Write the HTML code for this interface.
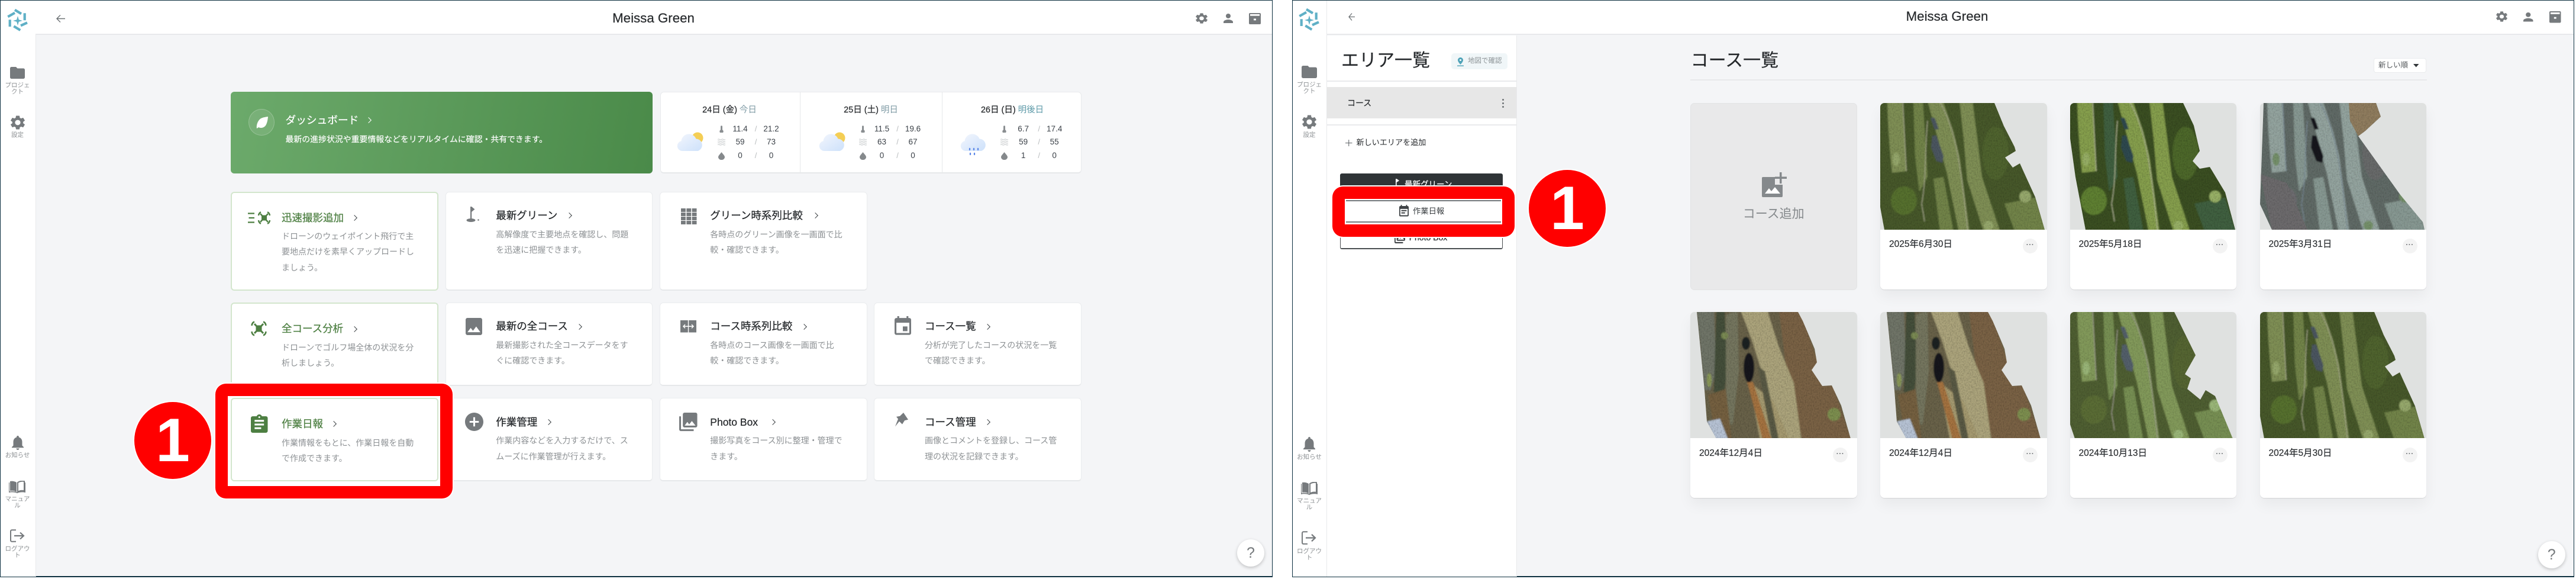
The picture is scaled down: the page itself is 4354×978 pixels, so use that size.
<!DOCTYPE html>
<html lang="ja"><head><meta charset="utf-8"><title>Meissa Green</title>
<style>
html,body{margin:0;padding:0;background:#fff}
body{position:relative;width:4354px;height:978px;overflow:hidden;font-family:"Liberation Sans","Noto Sans CJK JP",sans-serif;color:#25282b}
.p{position:absolute;top:0;height:975px;box-sizing:border-box;border:1px solid #0c2f3f;border-bottom-width:2px;background:#f4f5f7}
.b{position:absolute;box-sizing:border-box}
.t{position:absolute;white-space:nowrap;line-height:20px;height:20px}
.c{transform:translateX(-50%)}
svg{position:absolute;fill:#767a7d;overflow:visible}
.card{position:absolute;box-sizing:border-box;width:350.5px;background:#fff;border:1px solid #eaecee;border-bottom:2px solid #e6e8ea;border-radius:6px}
.gc{border:2px solid #d3e6cd}
.ti{font-size:17.5px;-webkit-text-stroke:.25px currentColor;color:#25282b}
.gr{color:#4d7f42}
.de{position:absolute;white-space:nowrap;font-size:14px;line-height:26.3px;color:#8d9194}
.sb{font-size:10.5px;color:#8c9093;line-height:11px;height:11px}
.ch{position:absolute;width:7px;height:7px;box-sizing:border-box;border-top:1.8px solid #3f4447;border-right:1.8px solid #3f4447;transform:translate(-50%,-50%) rotate(45deg)}
.red{position:absolute;box-sizing:border-box;border:21px solid #ff0000;border-radius:18px;background:#fff;box-shadow:0 0 0 2px #fff}
.num{position:absolute;width:130px;height:130px;border-radius:50%;background:#ff0000;box-shadow:0 0 0 2px #fff;color:#fff;font:bold 104px/130px "Liberation Sans",sans-serif;text-align:center}
.w{position:absolute;left:0;top:0;width:0;height:0}
.v{font-size:13.5px;color:#3a4047}
.sl{font-size:13px;color:#b9bcbe}
.q{position:absolute;width:46px;height:46px;border-radius:50%;background:#fff;box-shadow:0 2px 6px rgba(0,0,0,.22);color:#73777a;font-size:25px;line-height:46px;text-align:center}
.cc{position:absolute;width:281.5px;height:315px;background:#fff;border-radius:7px;box-shadow:0 1px 1px rgba(0,0,0,.1),0 12px 24px rgba(0,0,0,.05);overflow:hidden}
.cc svg{left:0;top:0;background:#dfe1e0;overflow:hidden}
.cc .dt{position:absolute;left:15px;top:229px;font-size:15.5px;line-height:20px;color:#2d3033;-webkit-text-stroke:.2px #2d3033;white-space:nowrap}
.cc .mn{position:absolute;left:241px;top:229px;width:25px;height:25px;border-radius:50%;background:#f3f3f3;color:#6f7376;text-align:center;font:bold 12px/20px "Liberation Sans",sans-serif;letter-spacing:.5px}
</style></head><body>

<svg width="0" height="0" style="left:0;top:0">
<defs>
<linearGradient id="cl" x1="0" y1="0" x2="1" y2="1"><stop offset="0" stop-color="#f3f6fc"/><stop offset="1" stop-color="#cde1fb"/></linearGradient>
<filter id="tx" x="0" y="0" width="100%" height="100%"><feTurbulence type="fractalNoise" baseFrequency=".5 .35" numOctaves="3" seed="4"/><feColorMatrix values="0 0 0 0 0 0 0 0 0 0 0 0 0 0 0 1.8 0 0 0 -.7"/></filter>
<filter id="bl" x="-5%" y="-5%" width="110%" height="110%"><feGaussianBlur stdDeviation="1.1"/></filter>
<symbol id="folder" viewBox="2 4 20 16" preserveAspectRatio="none"><path d="M10 4H4c-1.1 0-2 .9-2 2v12c0 1.1.9 2 2 2h16c1.1 0 2-.9 2-2V8c0-1.1-.9-2-2-2h-8l-2-2z"/></symbol>
<symbol id="gear" viewBox="2.6 2 18.8 20" preserveAspectRatio="none"><path d="M19.14 12.94c.04-.3.06-.61.06-.94 0-.32-.02-.64-.07-.94l2.03-1.58c.18-.14.23-.41.12-.61l-1.92-3.32c-.12-.22-.37-.29-.59-.22l-2.39.96c-.5-.38-1.03-.7-1.62-.94l-.36-2.54c-.04-.24-.24-.41-.48-.41h-3.84c-.24 0-.43.17-.47.41l-.36 2.54c-.59.24-1.13.57-1.62.94l-2.39-.96c-.22-.08-.47 0-.59.22L2.74 8.87c-.12.21-.08.47.12.61l2.03 1.58c-.05.3-.09.63-.09.94s.02.64.07.94l-2.03 1.58c-.18.14-.23.41-.12.61l1.92 3.32c.12.22.37.29.59.22l2.39-.96c.5.38 1.03.7 1.62.94l.36 2.54c.05.24.24.41.48.41h3.84c.24 0 .44-.17.47-.41l.36-2.54c.59-.24 1.13-.56 1.62-.94l2.39.96c.22.08.47 0 .59-.22l1.92-3.32c.12-.22.07-.47-.12-.61l-2.01-1.58zM12 15.6c-1.98 0-3.6-1.62-3.6-3.6s1.62-3.6 3.6-3.6 3.6 1.62 3.6 3.6-1.62 3.6-3.6 3.6z"/></symbol>
<symbol id="person" viewBox="4 4 16 16" preserveAspectRatio="none"><path d="M12 12c2.21 0 4-1.79 4-4s-1.79-4-4-4-4 1.79-4 4 1.79 4 4 4zm0 2c-2.67 0-8 1.34-8 4v2h16v-2c0-2.66-5.33-4-8-4z"/></symbol>
<symbol id="boxi" viewBox="0 0 20 20" preserveAspectRatio="none"><path d="M2 0h16a2 2 0 0 1 2 2v16a2 2 0 0 1-2 2H2a2 2 0 0 1-2-2V2a2 2 0 0 1 2-2z"/><rect x="2" y="2" width="16" height="3" fill="#fff"/><rect x="8" y="10" width="4" height="3" fill="#fff"/></symbol>
<symbol id="bell" viewBox="4 2.5 16 19.5" preserveAspectRatio="none"><path d="M12 22c1.1 0 2-.9 2-2h-4c0 1.1.9 2 2 2zm6-6v-5c0-3.07-1.63-5.64-4.5-6.32V4c0-.83-.67-1.5-1.5-1.5s-1.5.67-1.5 1.5v.68C7.64 5.36 6 7.92 6 11v5l-2 2v1h16v-1l-2-2z"/></symbol>
<symbol id="book" viewBox="0 0 28 21" preserveAspectRatio="none"><path d="M13 3C10 .8 5 .2 2 1v16c3-.6 8-.4 11 2z"/><path d="M15 3c3-2.2 8-2.8 11-2v16c-3-.6-8-.4-11 2z" fill="none" stroke="#767a7d" stroke-width="2"/><path d="M0 3v17c4-1 10-1 14 1 4-2 10-2 14-1V3h-1v15c-4-.6-10-.4-13 1.5C11 17.6 5 17.4 1 18V3z"/></symbol>
<symbol id="logout" viewBox="0 0 25 22" preserveAspectRatio="none"><path d="M10 1.2H3a2 2 0 0 0-2 2v15.6a2 2 0 0 0 2 2h7" fill="none" stroke="#767a7d" stroke-width="2"/><path d="M7 11h15M17 5.5l6 5.5-6 5.5" fill="none" stroke="#767a7d" stroke-width="2.2"/></symbol>
<symbol id="logo" viewBox="10 14 40 40"><g stroke="#5fb0c6" stroke-width="4.2" fill="none"><path d="M25 16.7L36 23.3M13.3 28.3L25 21.7M41.7 22.3V34.3M16.7 33.3V45M35 43.3L46 38.3M23.3 44.3L34.3 51"/></g><path d="M30 27l1.8 6.2L38 35l-6.2 1.8L30 43l-1.8-6.2L22 35l6.2-1.8z" fill="#5fb0c6"/></symbol>
<symbol id="add" viewBox="2 2 20 20" preserveAspectRatio="none"><path d="M12 2C6.48 2 2 6.48 2 12s4.48 10 10 10 10-4.48 10-10S17.52 2 12 2zm5 11h-4v4h-2v-4H7v-2h4V7h2v4h4v2z"/></symbol>
<symbol id="image" viewBox="3 3 18 18" preserveAspectRatio="none"><path d="M21 19V5c0-1.1-.9-2-2-2H5c-1.1 0-2 .9-2 2v14c0 1.1.9 2 2 2h14c1.1 0 2-.9 2-2zM8.5 13.5l2.5 3.01L14.5 12l4.5 6H5l3.5-4.5z"/></symbol>
<symbol id="lib" viewBox="2 2 20 20" preserveAspectRatio="none"><path d="M22 16V4c0-1.1-.9-2-2-2H8c-1.1 0-2 .9-2 2v12c0 1.1.9 2 2 2h12c1.1 0 2-.9 2-2zm-11-4l2.03 2.71L16 11l4 5H8l3-4zM2 6v14c0 1.1.9 2 2 2h14v-2H4V6H2z"/></symbol>
<symbol id="event" viewBox="3 1 18 20" preserveAspectRatio="none"><path d="M17 12h-5v5h5v-5zM16 1v2H8V1H6v2H5c-1.11 0-1.99.9-1.99 2L3 19c0 1.1.89 2 2 2h14c1.1 0 2-.9 2-2V5c0-1.1-.9-2-2-2h-1V1h-2zm3 18H5V8h14v11z"/></symbol>
<symbol id="note" viewBox="3 1 18 20" preserveAspectRatio="none"><path d="M17 10H7v2h10v-2zm2-7h-1V1h-2v2H8V1H6v2H5c-1.11 0-1.99.9-1.99 2L3 19c0 1.1.89 2 2 2h14c1.1 0 2-.9 2-2V5c0-1.1-.9-2-2-2zm0 16H5V8h14v11zm-5-5H7v2h7v-2z"/></symbol>
<symbol id="asg" viewBox="3 1 18 20" preserveAspectRatio="none"><path d="M19 3h-4.18C14.4 1.84 13.3 1 12 1s-2.4.84-2.82 2H5c-1.1 0-2 .9-2 2v14c0 1.1.9 2 2 2h14c1.1 0 2-.9 2-2V5c0-1.1-.9-2-2-2zm-7 0c.55 0 1 .45 1 1s-.45 1-1 1-1-.45-1-1 .45-1 1-1zm2 14H7v-2h7v2zm3-4H7v-2h10v2zm0-4H7V7h10v2z"/></symbol>
<symbol id="drone" viewBox="0 0 27 26" preserveAspectRatio="none"><g fill="none" stroke="#4d7f42" stroke-width="2.6"><path d="M1.5 8Q2 3 6 1.5M25.5 8Q25 3 21 1.5M1.5 18Q2 23 6 24.5M25.5 18Q25 23 21 24.5"/><path d="M6 5L21 21M21 5L6 21" stroke-width="3"/></g><rect x="8.5" y="7.5" width="10" height="11" fill="#4d7f42"/></symbol>
<symbol id="cloud" viewBox="0 0 46 33"><circle cx="35" cy="10" r="9.5" fill="#f4ce55"/><path d="M9 32a8.5 8.5 0 0 1-1.5-16.8A13 13 0 0 1 32.5 11.5 10.5 10.5 0 0 1 35.500 32z" fill="url(#cl)"/></symbol>
<symbol id="rain" viewBox="0 0 46 45"><path d="M9 32a8.5 8.5 0 0 1-1.5-16.8A13 13 0 0 1 32.5 11.5 10.5 10.5 0 0 1 35.500 32z" fill="url(#cl)"/><g fill="#5b87e8"><ellipse cx="16" cy="29" rx="1.2" ry="2.2"/><ellipse cx="23" cy="29" rx="1.2" ry="2.2"/><ellipse cx="30" cy="29" rx="1.2" ry="2.2"/><ellipse cx="17" cy="37" rx="1.2" ry="2.2"/><ellipse cx="24" cy="37" rx="1.2" ry="2.2"/></g></symbol>
<symbol id="th" viewBox="0 0 7 12" preserveAspectRatio="none"><path d="M2 1.8a1.5 1.5 0 0 1 3 0v5.4a3.2 3.2 0 1 1-3 0z" fill="#8a8e91"/></symbol>
<symbol id="hu" viewBox="0 0 13 12" preserveAspectRatio="none"><path d="M0 1.5q1.6-1.2 3.2 0t3.3 0 3.2 0 3.3 0M0 4.5q1.6-1.2 3.2 0t3.3 0 3.2 0 3.3 0M0 7.5q1.6-1.2 3.2 0t3.3 0 3.2 0 3.3 0M0 10.5q1.6-1.2 3.2 0t3.3 0 3.2 0 3.3 0" fill="none" stroke="#bcc0c2" stroke-width=".9"/></symbol>
<symbol id="dr" viewBox="0 0 11 13" preserveAspectRatio="none"><path d="M5.5 0C8 3.5 11 5.8 11 8.3A5.5 4.8 0 0 1 0 8.3C0 5.800 3 3.500 5.500 0z" fill="#85898c"/></symbol>

<g id="fw">
<rect x="-5" y="-5" width="292" height="224" fill="var(--b)"/>
<ellipse cx="40" cy="165" rx="22" ry="24" fill="var(--h)"/>
<ellipse cx="195" cy="85" rx="22" ry="45" fill="var(--h)" opacity=".5"/>
<path d="M12 -3L38 -3L41 60L45 115L20 118C16 80 13 40 12 -3z" fill="var(--f)"/>
<path d="M56 -3L72 -3L76 60L80 125L66 150L59 90z" fill="var(--e)"/>
<path d="M80 -3L106 -3L124 50L134 91L151 218L133 218L113 120L92 40z" fill="var(--f)"/>
<path d="M90 128L107 125L124 218L101 218z" fill="var(--e)"/>
<path d="M134 -3L156 -3L164 60L172 125L203 218L175 218L147 130L141 60z" fill="var(--f)"/>
<path d="M210 170L262 160L280 218L228 218z" fill="var(--e)"/>
<path d="M38 -3L44 115M80 30C75 80 78 130 70 170L75 200M100 -3C125 40 135 90 148 218" fill="none" stroke="var(--r)" stroke-width="1.3"/>
<path d="M85 25L92 25L99 44L92 45zM88 55L95 55L107 90L105 101L95 98L86 75z" fill="var(--l)"/>
<circle cx="245" cy="158" r="10" fill="var(--g)"/><circle cx="183" cy="207" r="8" fill="var(--g)"/><ellipse cx="27" cy="95" rx="6" ry="11" fill="var(--g)"/>
</g>
<g id="fwD">
<rect x="-5" y="-5" width="292" height="224" fill="#69624a"/>
<path d="M11 -3L40 -3L44 100L34 132L24 132z" fill="#6f7568"/>
<path d="M44 -3L58 -3L62 100L50 190L38 190z" fill="#44503a"/>
<path d="M60 5L80 -3L82 100L72 190L60 190z" fill="#74765e"/>
<path d="M150 -3L185 -3L216 85L207 98L225 125L241 124L273 218L190 218L165 120z" fill="#7a6244"/>
<path d="M85 -3L130 -3L150 60L175 120L188 218L155 218L130 130L105 50z" fill="#aca47c"/>
<path d="M100 118L140 150L168 218L118 218z" fill="#a59a70"/>
<path d="M96 118L106 118L138 218L123 218z" fill="#a5733f"/>
<path d="M114 92L126 100L150 218L138 218z" fill="#5a5a44"/>
<path d="M30 140L60 130L70 218L44 218z" fill="#75603f"/>
<ellipse cx="99" cy="94" rx="9" ry="25" fill="#12171b"/><ellipse cx="94" cy="53" rx="7" ry="11" fill="#1d2120"/>
<circle cx="243" cy="173" r="11" fill="#7d8f50"/><circle cx="58" cy="40" r="6" fill="#7a8a52"/><ellipse cx="32" cy="115" rx="4" ry="12" fill="#8b9a58"/>
<path d="M28 185L44 218L65 218L50 180z" fill="#b8c4d6"/>
</g>
<clipPath id="cA"><polygon points="0,0 193,0 209,39 227,74 229,81 211,92 224,109 236,102 262,159 278,214 7,214 0,176"/></clipPath>
<clipPath id="cB"><polygon points="0,0 191,0 209,38 219,81 207,98 219,111 236,108 262,151 279,214 26,214 9,125 0,60"/></clipPath>
<clipPath id="cC"><polygon points="6,0 196,0 204,23 178,47 166,56 237,155 275,201 278,214 20,214 0,171"/></clipPath>
<clipPath id="cD"><polygon points="11,0 182,0 190,15 210,62 214,85 205,98 223,125 239,124 255,158 271,214 44,214 28,185 24,132"/></clipPath>
<clipPath id="cE"><polygon points="0,0 176,0 212,73 194,105 204,112 198,130 220,148 229,132 245,142 275,214 8,214 0,190"/></clipPath>
</defs>
</svg>

<!-- PANEL 1 -->
<div class="p" style="left:0;width:2151px"></div>
<div class="b" style="left:1px;top:1px;width:59.5px;height:973px;background:#fff;border-right:1px solid #e8e9eb"></div>
<div class="b" style="left:60px;top:1px;width:2090px;height:58px;background:#fff;border-bottom:2px solid #e8e9eb"></div>
<svg style="left:10px;top:14px;width:40px;height:40px"><use href="#logo"/></svg>
<svg style="left:95px;top:25px;width:15px;height:13px" viewBox="0 0 15 13"><path d="M15 6.5H1.5M7 .5L1 6.5l6 6" fill="none" stroke="#6d7275" stroke-width="1.4"/></svg>
<div class="t c" style="left:1104.5px;top:21px;font-size:22.3px;-webkit-text-stroke:.2px #25282b">Meissa Green</div>
<svg style="left:2021px;top:22px;width:20px;height:18px"><use href="#gear"/></svg>
<svg style="left:2068px;top:23px;width:16px;height:16px"><use href="#person"/></svg>
<svg style="left:2111px;top:21.5px;width:20px;height:19px"><use href="#boxi"/></svg>

<svg style="left:17px;top:113px;width:25px;height:20px"><use href="#folder"/></svg>
<div class="t c sb" style="left:29.5px;top:138.5px">プロジェ</div><div class="t c sb" style="left:29.5px;top:149.5px">クト</div>
<svg style="left:17.5px;top:195px;width:24px;height:24px"><use href="#gear"/></svg>
<div class="t c sb" style="left:29.5px;top:222.5px">設定</div>
<svg style="left:20px;top:736px;width:20px;height:24px"><use href="#bell"/></svg>
<div class="t c sb" style="left:29.5px;top:763.5px">お知らせ</div>
<svg style="left:15px;top:812px;width:28px;height:21px"><use href="#book"/></svg>
<div class="t c sb" style="left:29.5px;top:837.5px">マニュア</div><div class="t c sb" style="left:29.5px;top:848.5px">ル</div>
<svg style="left:17px;top:894px;width:25px;height:22px"><use href="#logout"/></svg>
<div class="t c sb" style="left:29.5px;top:921.5px">ログアウ</div><div class="t c sb" style="left:29.5px;top:932.5px">ト</div>

<!-- Dashboard banner -->
<div class="b" style="left:390px;top:155px;width:713px;height:138px;border-radius:6px;background:linear-gradient(100deg,#6caa6b 0%,#4a8a49 100%)"></div>
<div class="b" style="left:419.5px;top:184px;width:44px;height:45px;border-radius:50%;background:rgba(255,255,255,.1);border:1px solid rgba(255,255,255,.22)"></div>
<svg style="left:431.5px;top:197px;width:22px;height:20px;fill:#fff" viewBox="0 0 22 20" preserveAspectRatio="none"><path d="M21 0C21 0 20.5 10 17 15 14 19 9 20 5 18L2 20C1 14 4 6 9 3 13 1 18 .5 21 0z"/></svg>
<div class="t" style="left:482.5px;top:193px;font-size:17.7px;color:#fff;-webkit-text-stroke:.25px #fff">ダッシュボード</div>
<div class="ch" style="left:623px;top:203px;border-color:#fff"></div>
<div class="t" style="left:482.5px;top:225px;font-size:13.9px;color:#fff;-webkit-text-stroke:.15px #fff">最新の進捗状況や重要情報などをリアルタイムに確認・共有できます。</div>

<!-- Weather -->
<div class="b" style="left:1115.5px;top:155px;width:712px;height:138px;background:#fff;border:1px solid #e8eaec;border-bottom:2px solid #e6e8ea;border-radius:6px"></div>
<div class="b" style="left:1352px;top:155px;width:1px;height:137px;background:#e6e8ea"></div>
<div class="b" style="left:1592px;top:155px;width:1px;height:137px;background:#e6e8ea"></div>

<div class="t c" style="left:1233px;top:175.5px;font-size:14.5px;-webkit-text-stroke:.2px #25282b">24日 (金) <span style="color:#7f9ba5;-webkit-text-stroke:0">今日</span></div>
<svg style="left:1144px;top:223px;width:46px;height:33px"><use href="#cloud"/></svg>
<div class="w" style="left:0">
<svg style="left:1215.5px;top:212px;width:7px;height:12px"><use href="#th"/></svg>
<div class="t c v" style="left:1251px;top:208px">11.4</div><div class="t c sl" style="left:1277.5px;top:208px">/</div><div class="t c v" style="left:1303.5px;top:208px">21.2</div>
<svg style="left:1212.5px;top:234px;width:13px;height:12px"><use href="#hu"/></svg>
<div class="t c v" style="left:1251px;top:230px">59</div><div class="t c sl" style="left:1277.5px;top:230px">/</div><div class="t c v" style="left:1303.5px;top:230px">73</div>
<svg style="left:1213.5px;top:256.5px;width:11px;height:13px"><use href="#dr"/></svg>
<div class="t c v" style="left:1251px;top:252.5px">0</div><div class="t c sl" style="left:1277.5px;top:252.5px">/</div><div class="t c v" style="left:1303.5px;top:252.5px">0</div>
</div>

<div class="t c" style="left:1472px;top:175.5px;font-size:14.5px;-webkit-text-stroke:.2px #25282b">25日 (土) <span style="color:#7f9ba5;-webkit-text-stroke:0">明日</span></div>
<svg style="left:1383.5px;top:223px;width:46px;height:33px"><use href="#cloud"/></svg>
<div class="w" style="left:239.5px">
<svg style="left:1215.5px;top:212px;width:7px;height:12px"><use href="#th"/></svg>
<div class="t c v" style="left:1251px;top:208px">11.5</div><div class="t c sl" style="left:1277.5px;top:208px">/</div><div class="t c v" style="left:1303.5px;top:208px">19.6</div>
<svg style="left:1212.5px;top:234px;width:13px;height:12px"><use href="#hu"/></svg>
<div class="t c v" style="left:1251px;top:230px">63</div><div class="t c sl" style="left:1277.5px;top:230px">/</div><div class="t c v" style="left:1303.5px;top:230px">67</div>
<svg style="left:1213.5px;top:256.5px;width:11px;height:13px"><use href="#dr"/></svg>
<div class="t c v" style="left:1251px;top:252.5px">0</div><div class="t c sl" style="left:1277.5px;top:252.5px">/</div><div class="t c v" style="left:1303.5px;top:252.5px">0</div>
</div>

<div class="t c" style="left:1711px;top:175.5px;font-size:14.5px;-webkit-text-stroke:.2px #25282b">26日 (日) <span style="color:#5d9aa8;-webkit-text-stroke:0">明後日</span></div>
<svg style="left:1623px;top:223px;width:46px;height:45px"><use href="#rain"/></svg>
<div class="w" style="left:478.7px">
<svg style="left:1215.5px;top:212px;width:7px;height:12px"><use href="#th"/></svg>
<div class="t c v" style="left:1251px;top:208px">6.7</div><div class="t c sl" style="left:1277.5px;top:208px">/</div><div class="t c v" style="left:1303.5px;top:208px">17.4</div>
<svg style="left:1212.5px;top:234px;width:13px;height:12px"><use href="#hu"/></svg>
<div class="t c v" style="left:1251px;top:230px">59</div><div class="t c sl" style="left:1277.5px;top:230px">/</div><div class="t c v" style="left:1303.5px;top:230px">55</div>
<svg style="left:1213.5px;top:256.5px;width:11px;height:13px"><use href="#dr"/></svg>
<div class="t c v" style="left:1251px;top:252.5px">1</div><div class="t c sl" style="left:1277.5px;top:252.5px">/</div><div class="t c v" style="left:1303.5px;top:252.5px">0</div>
</div>

<!-- Row 1 -->
<div class="card gc" style="left:390px;top:324px;height:167px"></div>
<svg style="left:419px;top:357px;width:38px;height:22px" viewBox="0 0 38 22" preserveAspectRatio="none"><path d="M0 3.5h11M1.5 11h9.5M0 18.5h11" stroke="#4d7f42" stroke-width="2.2" fill="none"/><g fill="none" stroke="#4d7f42" stroke-width="2.4"><path d="M18 7Q18.5 2.5 22 1.2M37 7Q36.5 2.5 33 1.2M18 15Q18.5 19.5 22 20.8M37 15Q36.5 19.5 33 20.8"/><path d="M21 4L34 18M34 4L21 18"/></g><rect x="23" y="6.5" width="9" height="9" fill="#4d7f42"/></svg>
<div class="t ti gr" style="left:476px;top:357.7px">迅速撮影追加</div><div class="ch" style="left:599px;top:368px"></div>
<div class="de" style="left:476px;top:386px">ドローンのウェイポイント飛行で主<br>要地点だけを素早くアップロードし<br>ましょう。</div>

<div class="card" style="left:752.7px;top:324px;height:167px"></div>
<svg style="left:787px;top:349px;width:23px;height:26px" viewBox="0 0 23 26" preserveAspectRatio="none"><rect x="8" y="0" width="2.2" height="22"/><path d="M10 0L15.5 4.5L10 9z"/><ellipse cx="9" cy="23" rx="7.5" ry="3"/><circle cx="21.5" cy="22.5" r="1.3"/></svg>
<div class="t ti" style="left:838.3px;top:354px">最新グリーン</div><div class="ch" style="left:961.5px;top:364px"></div>
<div class="de" style="left:838.3px;top:382.5px">高解像度で主要地点を確認し、問題<br>を迅速に把握できます。</div>

<div class="card" style="left:1115.4px;top:324px;height:167px"></div>
<svg style="left:1150.5px;top:352px;width:26.5px;height:27px" viewBox="0 0 27 27" preserveAspectRatio="none"><path d="M0 0h8v6H0zM9.5 0h8v6h-8zM19 0h8v6h-8zM0 7h8v6H0zM9.5 7h8v6h-8zM19 7h8v6h-8zM0 14h8v6H0zM9.5 14h8v6h-8zM19 14h8v6h-8zM0 21h8v6H0zM9.5 21h8v6h-8zM19 21h8v6h-8z"/></svg>
<div class="t ti" style="left:1200.3px;top:354px">グリーン時系列比較</div><div class="ch" style="left:1377.5px;top:364px"></div>
<div class="de" style="left:1200.3px;top:382.5px">各時点のグリーン画像を一画面で比<br>較・確認できます。</div>

<!-- Row 2 -->
<div class="card gc" style="left:390px;top:510.7px;height:141.5px"></div>
<svg style="left:424px;top:542px;width:27px;height:26px"><use href="#drone"/></svg>
<div class="t ti gr" style="left:476px;top:545px">全コース分析</div><div class="ch" style="left:599px;top:556px"></div>
<div class="de" style="left:476px;top:574px">ドローンでゴルフ場全体の状況を分<br>析しましょう。</div>

<div class="card" style="left:752.7px;top:510.7px;height:141.5px"></div>
<svg style="left:787px;top:537px;width:28px;height:29px"><use href="#image"/></svg>
<div class="t ti" style="left:838.3px;top:540.7px">最新の全コース</div><div class="ch" style="left:979px;top:551.5px"></div>
<div class="de" style="left:838.3px;top:569.7px">最新撮影された全コースデータをす<br>ぐに確認できます。</div>

<div class="card" style="left:1115.4px;top:510.7px;height:141.5px"></div>
<svg style="left:1150px;top:540.7px;width:27px;height:20.5px" viewBox="0 0 27 20" preserveAspectRatio="none"><rect width="27" height="20"/><rect x="12.8" y="0" width="1.4" height="20" fill="#fff"/><path d="M5 10h17M8 7l-3 3 3 3M19 7l3 3-3 3" stroke="#fff" stroke-width="1.5" fill="none"/></svg>
<div class="t ti" style="left:1200.3px;top:540.7px">コース時系列比較</div><div class="ch" style="left:1358.5px;top:551.5px"></div>
<div class="de" style="left:1200.3px;top:569.7px">各時点のコース画像を一画面で比<br>較・確認できます。</div>

<div class="card" style="left:1477.4px;top:510.7px;height:141.5px"></div>
<svg style="left:1512px;top:534px;width:28px;height:31.7px"><use href="#event"/></svg>
<div class="t ti" style="left:1563px;top:540.7px">コース一覧</div><div class="ch" style="left:1669px;top:551.5px"></div>
<div class="de" style="left:1563px;top:569.7px">分析が完了したコースの状況を一覧<br>で確認できます。</div>

<!-- Row 3 -->
<div class="card" style="left:752.7px;top:671.7px;height:141.5px"></div>
<svg style="left:785.7px;top:696.7px;width:31px;height:31px"><use href="#add"/></svg>
<div class="t ti" style="left:838.3px;top:702.7px">作業管理</div><div class="ch" style="left:926.5px;top:713px"></div>
<div class="de" style="left:838.3px;top:731.3px">作業内容などを入力するだけで、ス<br>ムーズに作業管理が行えます。</div>

<div class="card" style="left:1115.4px;top:671.7px;height:141.5px"></div>
<svg style="left:1148px;top:696.7px;width:30.6px;height:31.3px"><use href="#lib"/></svg>
<div class="t ti" style="left:1200.3px;top:702.7px">Photo Box</div><div class="ch" style="left:1306px;top:713px"></div>
<div class="de" style="left:1200.3px;top:731.3px">撮影写真をコース別に整理・管理で<br>きます。</div>

<div class="card" style="left:1477.4px;top:671.7px;height:141.5px"></div>
<svg style="left:1512px;top:696.7px;width:24px;height:23.5px" viewBox="0 0 24 24" preserveAspectRatio="none"><path d="M15 0L23 12L17 13.5L13 20L8 15L1 24L6 11L3 7L9 6z"/></svg>
<div class="t ti" style="left:1563px;top:702.7px">コース管理</div><div class="ch" style="left:1669px;top:713px"></div>
<div class="de" style="left:1563px;top:731.3px">画像とコメントを登録し、コース管<br>理の状況を記録できます。</div>

<div class="q" style="left:2091px;top:911px">?</div>

<!-- Annotation 1 -->
<div class="red" style="left:364px;top:648px;width:401px;height:194px"></div>
<div class="card gc" style="left:390px;top:671.7px;height:141.5px"></div>
<svg style="left:424px;top:700px;width:28.5px;height:31px;fill:#4d7f42"><use href="#asg"/></svg>
<div class="t ti gr" style="left:476px;top:706px">作業日報</div><div class="ch" style="left:564px;top:716px"></div>
<div class="de" style="left:476px;top:734.7px">作業情報をもとに、作業日報を自動<br>で作成できます。</div>
<div class="num" style="left:227px;top:679px">1</div>

<!-- PANEL 2 -->
<div class="p" style="left:2184px;width:2167px"></div>
<div class="b" style="left:2185px;top:1px;width:58px;height:973px;background:#fff;border-right:1px solid #e8e9eb"></div>
<div class="b" style="left:2243px;top:1px;width:2107px;height:58px;background:#fff;border-bottom:2px solid #e8e9eb"></div>
<svg style="left:2193px;top:12.5px;width:40px;height:40px"><use href="#logo"/></svg>
<svg style="left:2279px;top:22px;width:11px;height:13px" viewBox="0 0 11 13" preserveAspectRatio="none"><path d="M11 6.5H1.5M6 .5L1 6.5l5 6" fill="none" stroke="#6d7275" stroke-width="1.3"/></svg>
<div class="t c" style="left:3291px;top:18px;font-size:22.3px;-webkit-text-stroke:.2px #25282b">Meissa Green</div>
<svg style="left:4219px;top:19px;width:19px;height:18px"><use href="#gear"/></svg>
<svg style="left:4265px;top:20.5px;width:16.5px;height:15.5px"><use href="#person"/></svg>
<svg style="left:4309px;top:18.5px;width:19.5px;height:19.5px"><use href="#boxi"/></svg>

<svg style="left:2200px;top:111px;width:26px;height:21px"><use href="#folder"/></svg>
<div class="t c sb" style="left:2213px;top:137.5px">プロジェ</div><div class="t c sb" style="left:2213px;top:148.5px">クト</div>
<svg style="left:2201px;top:194px;width:24px;height:24px"><use href="#gear"/></svg>
<div class="t c sb" style="left:2213px;top:222.5px">設定</div>
<svg style="left:2203px;top:738px;width:20px;height:25px"><use href="#bell"/></svg>
<div class="t c sb" style="left:2213px;top:766.5px">お知らせ</div>
<svg style="left:2199px;top:814px;width:28px;height:22px"><use href="#book"/></svg>
<div class="t c sb" style="left:2213px;top:840.5px">マニュア</div><div class="t c sb" style="left:2213px;top:851.5px">ル</div>
<svg style="left:2200px;top:897px;width:25px;height:23px"><use href="#logout"/></svg>
<div class="t c sb" style="left:2213px;top:925.5px">ログアウ</div><div class="t c sb" style="left:2213px;top:936.5px">ト</div>

<!-- area list -->
<div class="b" style="left:2243px;top:60px;width:320.5px;height:914px;background:#fff;border-right:1px solid #e8e9eb"></div>
<div class="t" style="left:2267px;top:93px;font-size:30px;line-height:20px;-webkit-text-stroke:.2px #25282b">エリア一覧</div>
<div class="b" style="left:2452.6px;top:90px;width:95px;height:27px;background:#f0f6f8;border-radius:5px"></div>
<svg style="left:2463px;top:97px;width:11px;height:15px" viewBox="0 0 11 15" preserveAspectRatio="none"><path d="M5.5 0a4.5 4.5 0 0 1 4.5 4.5c0 3-4.5 7.5-4.5 7.5S1 7.5 1 4.5A4.5 4.5 0 0 1 5.5 0z" fill="#4fa3b8"/><circle cx="5.5" cy="4.5" r="1.5" fill="#fff"/><rect x="0" y="13.5" width="11" height="1.4" fill="#4fa3b8"/></svg>
<div class="t" style="left:2481px;top:93px;font-size:11.5px;color:#8c9396">地図で確認</div>
<div class="b" style="left:2243px;top:135.5px;width:320px;height:2px;background:#e9eaec"></div>
<div class="b" style="left:2243px;top:147px;width:320px;height:53px;background:#e7e7e7"></div>
<div class="t" style="left:2277px;top:163.5px;font-size:14px;-webkit-text-stroke:.15px #25282b">コース</div>
<div class="b" style="left:2538.5px;top:167px;width:3px;height:3px;border-radius:50%;background:#6d7275"></div>
<div class="b" style="left:2538.5px;top:173px;width:3px;height:3px;border-radius:50%;background:#6d7275"></div>
<div class="b" style="left:2538.5px;top:179px;width:3px;height:3px;border-radius:50%;background:#6d7275"></div>
<div class="b" style="left:2243px;top:210px;width:320px;height:2px;background:#e9eaec"></div>
<svg style="left:2273.5px;top:236px;width:11.5px;height:11px" viewBox="0 0 11 11" preserveAspectRatio="none"><path d="M5.5 0v11M0 5.5h11" stroke="#5d6265" stroke-width="1" fill="none"/></svg>
<div class="t" style="left:2292.5px;top:230.7px;font-size:13.1px">新しいエリアを追加</div>

<div class="b" style="left:2265.4px;top:293px;width:275px;height:42px;border-radius:3px;background:#2f3437"></div>
<svg style="left:2357px;top:302px;width:11px;height:20px;fill:#fff" viewBox="0 0 11 20" preserveAspectRatio="none"><rect x="2" width="1.6" height="20"/><path d="M3.6 0L8 3L3.6 6z"/></svg>
<div class="t" style="left:2374px;top:302px;font-size:13.5px;color:#fff;-webkit-text-stroke:.2px #fff">最新グリーン</div>
<div class="b" style="left:2265.4px;top:379px;width:275px;height:42px;border-radius:3px;background:#fff;border:1px solid #4a4e51;border-bottom-width:2px"></div>
<svg style="left:2357px;top:390px;width:18px;height:21px;fill:#3e4245"><use href="#lib"/></svg>
<div class="t" style="left:2381.7px;top:391px;font-size:14px;color:#33373a;-webkit-text-stroke:.3px #33373a">Photo Box</div>

<div class="red" style="left:2252px;top:315px;width:308px;height:85px"></div>
<div class="b" style="left:2275px;top:338px;width:262px;height:1.5px;background:#75797c"></div>
<div class="b" style="left:2275px;top:374px;width:262px;height:1.5px;background:#75797c"></div>
<svg style="left:2365px;top:346px;width:16px;height:19.5px;fill:#3e4245"><use href="#note"/></svg>
<div class="t" style="left:2388px;top:347px;font-size:13.3px;color:#3a3e41">作業日報</div>
<div class="num" style="left:2584px;top:287px">1</div>

<!-- course list -->
<div class="t" style="left:2857.6px;top:93px;font-size:30px;-webkit-text-stroke:.2px #25282b">コース一覧</div>
<div class="b" style="left:2857px;top:134px;width:1244.5px;height:2px;background:#e7e8ea"></div>
<div class="b" style="left:4011.6px;top:97.5px;width:89.5px;height:25px;background:#fff;border:1px solid #e9ebed;border-radius:4px"></div>
<div class="t" style="left:4020px;top:99.7px;font-size:12.5px;color:#55595c">新しい順</div>
<svg style="left:4079px;top:108px;width:9.5px;height:5.5px;fill:#33373a" viewBox="0 0 10 6" preserveAspectRatio="none"><path d="M0 0h10L5 6z"/></svg>

<div class="b" style="left:2856.6px;top:174.3px;width:282.2px;height:316px;background:#e9e9ea;border:1px solid #e2e3e4;border-radius:7px"></div>
<svg style="left:2977.5px;top:290.7px;width:42px;height:42px" viewBox="0 0 42 42" preserveAspectRatio="none"><path fill="#85898c" d="M2 8H22V21H35V40a2 2 0 0 1-2 2H2a2 2 0 0 1-2-2V10a2 2 0 0 1 2-2z"/><path fill="#fff" d="M5 36L12 27L16 32L22 25L31 36z"/><path fill="#85898c" d="M30 0h3.5v7.5H42V11h-8.5v8H30v-8h-8V7.5h8z"/></svg>
<div class="t c" style="left:2997.7px;top:352px;font-size:21px;color:#85898c">コース追加</div>

<div class="cc" style="left:3178px;top:174px"><svg width="281.5" height="214" viewBox="0 0 281.5 214"><g clip-path="url(#cA)" style="--b:#47582a;--h:#576f2f;--f:#7f8f54;--e:#72844a;--r:#a8aa8c;--l:#4b5661;--g:#96a86c"><use href="#fw" filter="url(#bl)"/><rect width="282" height="214" filter="url(#tx)" opacity=".2"/></g></svg><div class="dt">2025年6月30日</div><div class="mn">···</div></div>

<div class="cc" style="left:3498.5px;top:174px"><svg width="281.5" height="214" viewBox="0 0 281.5 214"><g clip-path="url(#cB)" style="--b:#3b4f22;--h:#5f8030;--f:#869f4e;--e:#41603f;--r:#b4b998;--l:#2e4850;--g:#98b066"><use href="#fw" filter="url(#bl)"/><rect width="282" height="214" filter="url(#tx)" opacity=".22"/></g></svg><div class="dt">2025年5月18日</div><div class="mn">···</div></div>

<div class="cc" style="left:3819.5px;top:174px"><svg width="281.5" height="214" viewBox="0 0 281.5 214"><g clip-path="url(#cC)" style="--b:#616b66;--h:#6d6c70;--f:#93a39e;--e:#879892;--r:#7a8b98;--l:#12181f;--g:#74906a"><use href="#fw" filter="url(#bl)"/><path d="M150 0H196L204 23L178 47L166 56L152 30z" fill="#8f7c5e"/><path d="M0 120L45 135L80 214H20z" fill="#6c6a6c"/><rect width="282" height="214" filter="url(#tx)" opacity=".18"/></g></svg><div class="dt">2025年3月31日</div><div class="mn">···</div></div>

<div class="cc" style="left:2857px;top:527px;height:314px"><svg width="281.5" height="213" viewBox="0 0 281.5 213"><g clip-path="url(#cD)"><use href="#fwD" filter="url(#bl)"/><rect width="282" height="214" filter="url(#tx)" opacity=".22"/></g></svg><div class="dt">2024年12月4日</div><div class="mn">···</div></div>

<div class="cc" style="left:3178px;top:527px;height:314px"><svg width="281.5" height="213" viewBox="0 0 281.5 213"><g clip-path="url(#cD)"><use href="#fwD" filter="url(#bl)"/><rect width="282" height="214" filter="url(#tx)" opacity=".22"/></g></svg><div class="dt">2024年12月4日</div><div class="mn">···</div></div>

<div class="cc" style="left:3498.5px;top:527px;height:314px"><svg width="281.5" height="213" viewBox="0 0 281.5 213"><g clip-path="url(#cE)" style="--b:#4f5f30;--h:#5a6c36;--f:#82995a;--e:#778f52;--r:#a09f90;--l:#525f6a;--g:#9ab678"><use href="#fw" filter="url(#bl)"/><rect width="282" height="214" filter="url(#tx)" opacity=".18"/></g></svg><div class="dt">2024年10月13日</div><div class="mn">···</div></div>

<div class="cc" style="left:3819.5px;top:527px;height:314px"><svg width="281.5" height="213" viewBox="0 0 281.5 213"><g clip-path="url(#cA)" style="--b:#47582a;--h:#576f2f;--f:#7f8f54;--e:#72844a;--r:#a8aa8c;--l:#4b5661;--g:#96a86c"><use href="#fw" filter="url(#bl)"/><rect width="282" height="214" filter="url(#tx)" opacity=".2"/></g></svg><div class="dt">2024年5月30日</div><div class="mn">···</div></div>

<div class="q" style="left:4289.7px;top:914px">?</div>
</body></html>
